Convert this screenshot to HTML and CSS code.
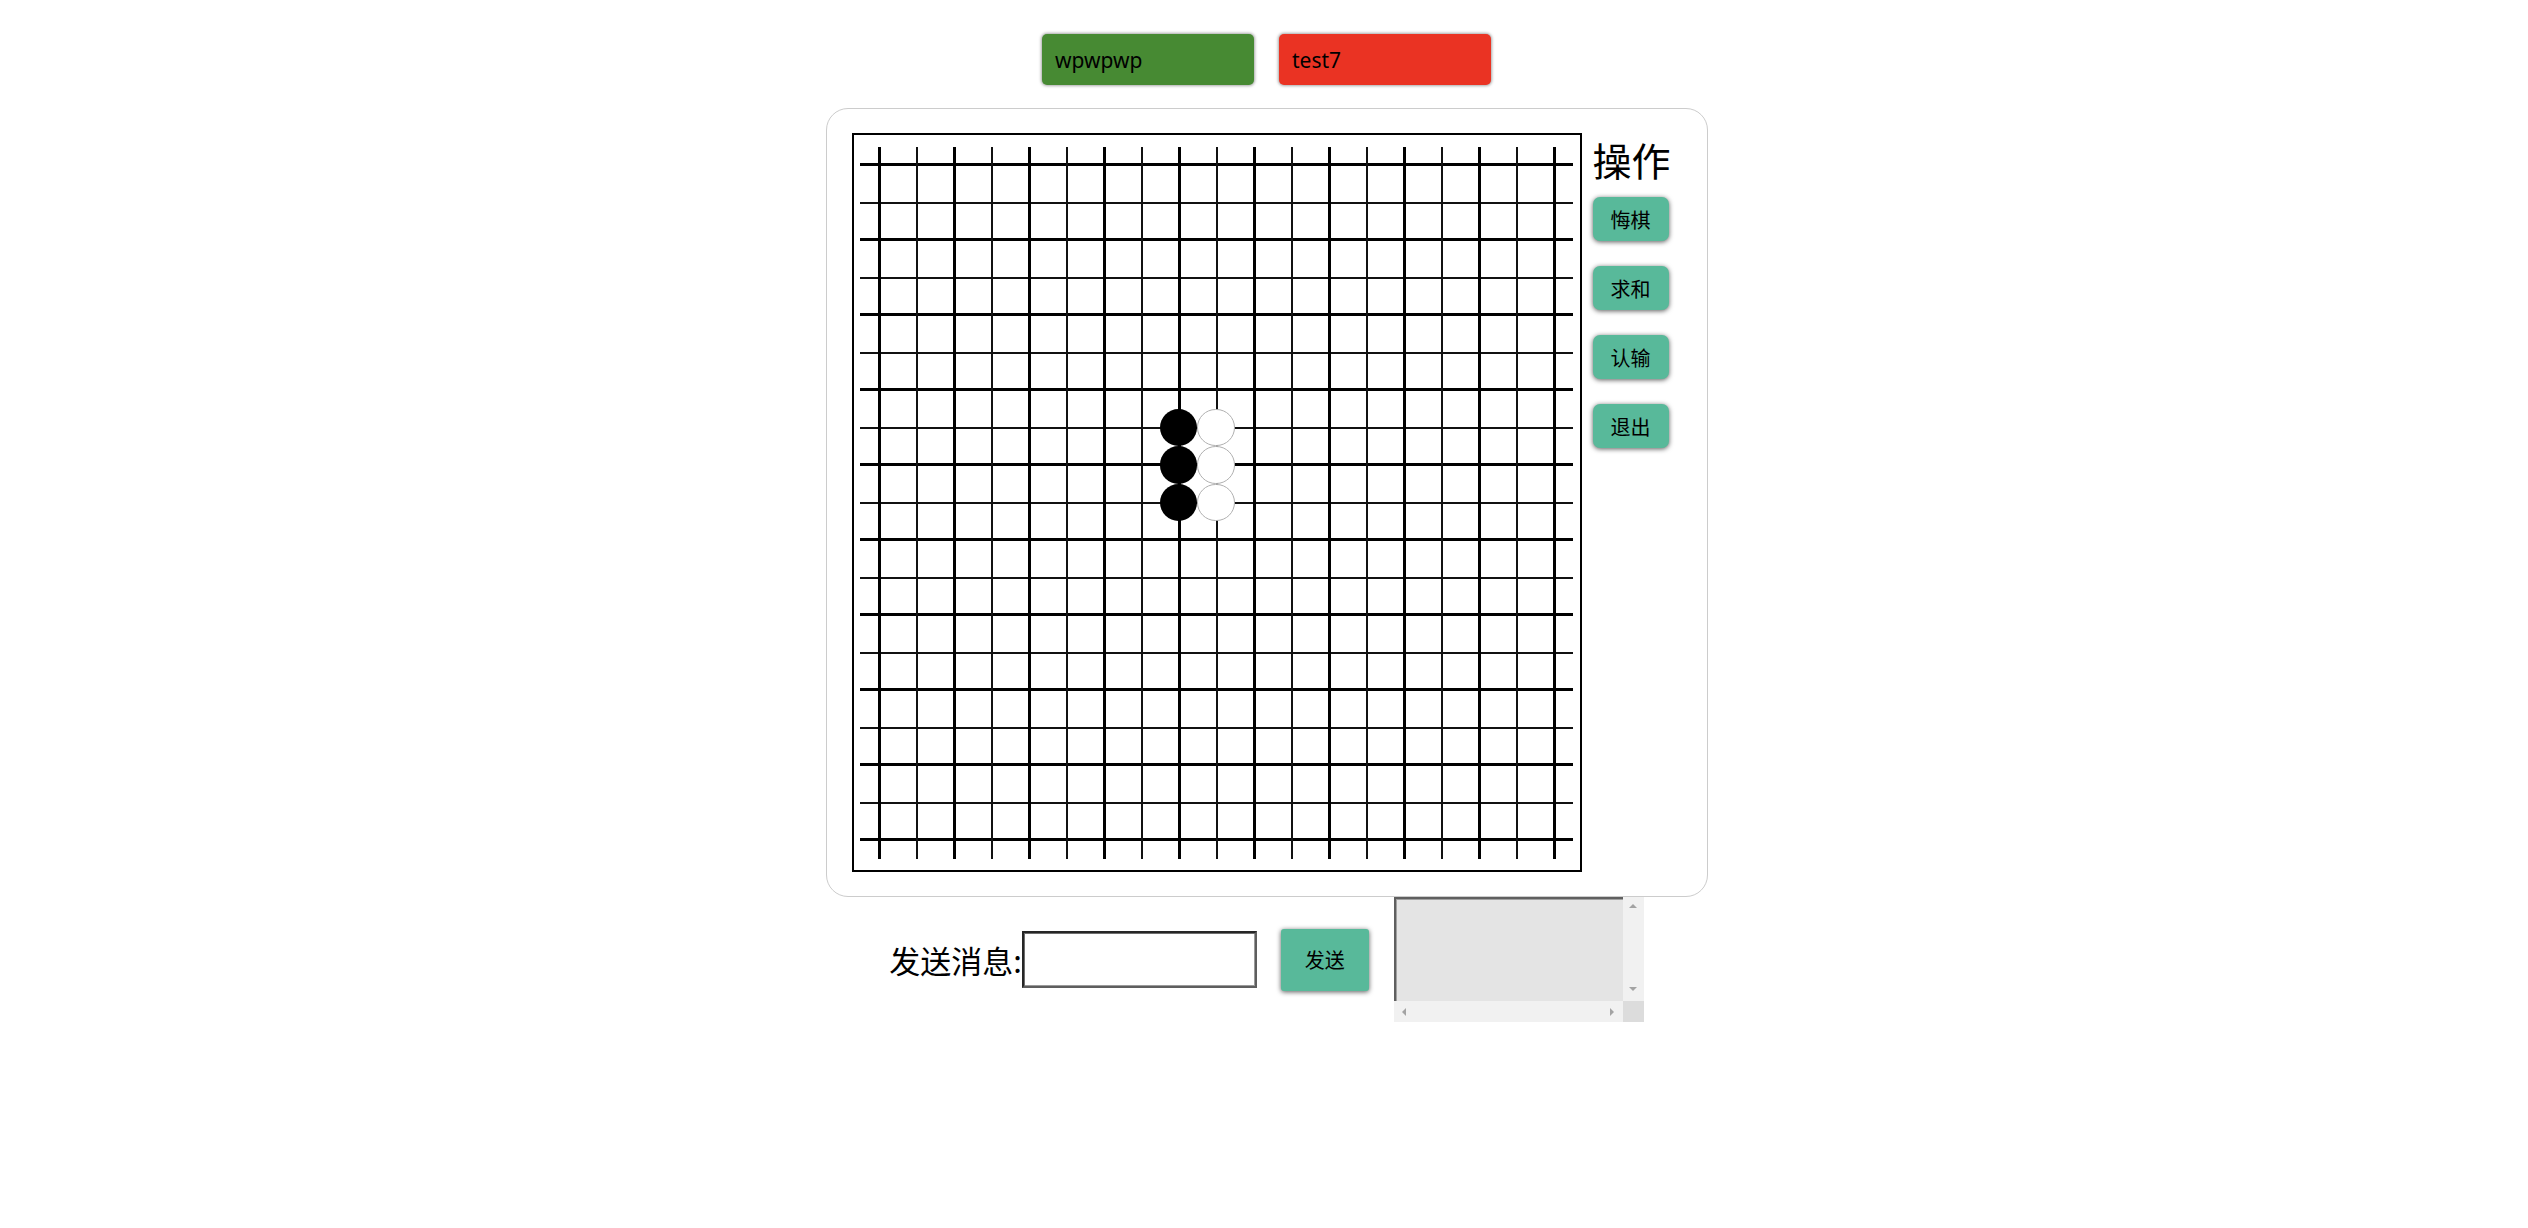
FILE: index.html
```html
<!DOCTYPE html>
<html lang="zh-CN">
<head>
<meta charset="utf-8">
<title>五子棋</title>
<link rel="stylesheet" href="styles.css">
</head>
<body>
<div class="page">
  <div class="players">
    <div class="player player-me">wpwpwp</div>
    <div class="player player-op">test7</div>
  </div>

  <div class="panel">
    <div class="board">
      <div class="hlines"></div>
      <div class="vlines"></div>
      <div class="stone black" style="--c:8;--r:7"></div>
      <div class="stone black" style="--c:8;--r:8"></div>
      <div class="stone black" style="--c:8;--r:9"></div>
      <div class="stone white" style="--c:9;--r:7"></div>
      <div class="stone white" style="--c:9;--r:8"></div>
      <div class="stone white" style="--c:9;--r:9"></div>
    </div>
    <div class="ops">
      <div class="ops-title">操作</div>
      <div class="op-list">
        <button class="op">悔棋</button>
        <button class="op">求和</button>
        <button class="op">认输</button>
        <button class="op">退出</button>
      </div>
    </div>
  </div>

  <div class="chat">
    <label class="chat-label">发送消息:</label>
    <input class="chat-input" type="text">
    <button class="send">发送</button>
    <div class="log">
      <div class="log-area"></div>
      <div class="vbar"><span class="arr up"></span><span class="arr down"></span></div>
      <div class="hbar"><span class="arr left"></span><span class="arr right"></span></div>
      <div class="corner"></div>
    </div>
  </div>
</div>
</body>
</html>
```

FILE: styles.css
```css
* { box-sizing: border-box; }

html, body {
  margin: 0;
  background: #fff;
}

body {
  padding-left: 5px;
  font-family: "Noto Sans", "Noto Sans CJK SC", sans-serif;
  color: #000;
}

.page {
  display: flex;
  flex-direction: column;
  align-items: center;
  padding-top: 34px;
}

/* players */
.players {
  display: flex;
  gap: 25px;
}

.player {
  width: 212px;
  height: 51px;
  border-radius: 5px;
  display: flex;
  align-items: center;
  padding-left: 13px;
  font-size: 21px;
  box-shadow: 0 0 3px 1px rgba(0, 0, 0, 0.35);
}

.player-me { background: #478a33; }
.player-op { background: #ea3323; }

/* panel */
.panel {
  margin-top: 23px;
  display: flex;
  gap: 11px;
  padding: 24px 38px 24px 25px;
  border: 1px solid #cccccc;
  border-radius: 22px;
}

.board {
  position: relative;
  width: 730px;
  height: 739px;
  border: 2px solid #000;
  background: #fff;
}

.hlines {
  position: absolute;
  left: 6px;
  top: 28px;
  width: 713px;
  height: 678px;
  background: repeating-linear-gradient(to bottom,
    #000 0 3px, transparent 3px 39px,
    #111 39px 41px, transparent 41px 75px);
}

.vlines {
  position: absolute;
  left: 24px;
  top: 12px;
  width: 678px;
  height: 712px;
  background: repeating-linear-gradient(to right,
    #000 0 3px, transparent 3px 38px,
    #111 38px 40px, transparent 40px 75px);
}

.stone {
  position: absolute;
  width: 37.5px;
  height: 37.5px;
  border-radius: 50%;
  left: calc(var(--c) * 37.5px + 6.25px);
  top: calc(var(--r) * 37.5px + 11.25px);
}

.stone.black { background: #000; }
.stone.white { background: #fff; border: 1px solid #b0b0b0; }

.ops {
  padding-top: 7px;
  display: flex;
  flex-direction: column;
  width: 76px;
}

.ops-title {
  font-family: "Noto Sans CJK SC", sans-serif;
  font-size: 39px;
  line-height: 39px;
  white-space: nowrap;
  margin-bottom: 18px;
}

.op-list {
  display: flex;
  flex-direction: column;
  gap: 25px;
}

.op {
  width: 76px;
  height: 44px;
  border: none;
  padding: 0;
  border-radius: 7px;
  background: #58b99a;
  color: #000;
  font-family: "Noto Sans CJK SC", sans-serif;
  font-size: 20px;
  box-shadow: 0 1px 5px rgba(0, 0, 0, 0.65);
}

/* chat */
.chat {
  display: flex;
  align-items: center;
}

.chat-label {
  font-family: "Noto Sans CJK SC", sans-serif;
  font-size: 31px;
  line-height: 40px;
}

.chat-input {
  width: 235px;
  height: 57px;
  padding: 0 4px;
  border-style: solid;
  border-width: 2px;
  border-color: #262626 #5e5e5e #5e5e5e #262626;
  box-shadow: inset 1px 1px 0 #6e6e6e, inset -1px -1px 0 #9a9a9a;
  background: #fff;
  font-size: 20px;
}

.send {
  margin-left: 24px;
  width: 88px;
  height: 62px;
  border: none;
  padding: 0;
  border-radius: 3px;
  background: #58b99a;
  color: #000;
  font-family: "Noto Sans CJK SC", sans-serif;
  font-size: 20px;
  box-shadow: 0 1px 5px rgba(0, 0, 0, 0.65);
}

.log {
  margin-left: 25px;
  width: 250px;
  height: 125px;
  display: grid;
  grid-template-columns: 229px 21px;
  grid-template-rows: 104px 21px;
}

.log-area {
  background: #e4e4e4;
  border-top: 2px solid #5f5f5f;
  border-left: 2px solid #5f5f5f;
  box-shadow: inset 1px 1px 0 #a0a0a0;
}

.vbar {
  background: #f1f1f1;
  display: flex;
  flex-direction: column;
  justify-content: space-between;
  align-items: center;
  padding: 7px 0 10px;
}

.hbar {
  background: #f1f1f1;
  display: flex;
  justify-content: space-between;
  align-items: center;
  padding: 0 9px 0 8px;
}

.corner { background: #dcdcdc; }

.arr {
  display: block;
  width: 0;
  height: 0;
}

.arr.up {
  border-left: 4.5px solid transparent;
  border-right: 4.5px solid transparent;
  border-bottom: 4px solid #a3a3a3;
}

.arr.down {
  border-left: 4.5px solid transparent;
  border-right: 4.5px solid transparent;
  border-top: 4px solid #a3a3a3;
}

.arr.left {
  border-top: 4.5px solid transparent;
  border-bottom: 4.5px solid transparent;
  border-right: 4px solid #a3a3a3;
}

.arr.right {
  border-top: 4.5px solid transparent;
  border-bottom: 4.5px solid transparent;
  border-left: 4px solid #a3a3a3;
}
```
